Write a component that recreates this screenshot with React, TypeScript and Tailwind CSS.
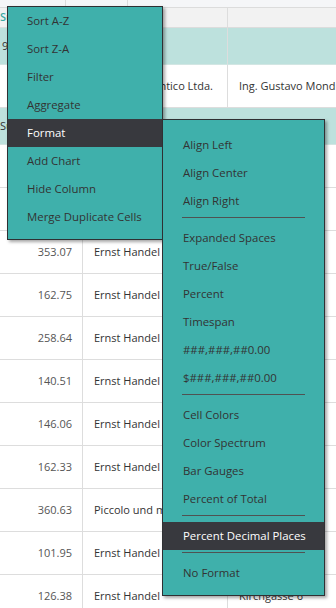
import React from "react";

const font = { fontFamily: '"Open Sans", "Noto Sans", Arial, sans-serif' };

const dataRows: [string, string, string?][] = [
  ["353.07", "Ernst Handel"],
  ["162.75", "Ernst Handel"],
  ["258.64", "Ernst Handel"],
  ["140.51", "Ernst Handel"],
  ["146.06", "Ernst Handel"],
  ["162.33", "Ernst Handel"],
  ["360.63", "Piccolo und mehr"],
  ["101.95", "Ernst Handel"],
  ["126.38", "Ernst Handel", "Kirchgasse 6"],
];

function Cell({ children, className = "" }: { children?: React.ReactNode; className?: string }) {
  return (
    <div className={"flex items-center overflow-hidden whitespace-nowrap border-r border-[#dddddd] " + className}>
      {children}
    </div>
  );
}

const mainItems = ["Sort A-Z", "Sort Z-A", "Filter", "Aggregate", "Format", "Add Chart", "Hide Column", "Merge Duplicate Cells"];

type SubItem = { t: string; sep?: boolean; hi?: boolean };
const subItems: SubItem[] = [
  { t: "Align Left" },
  { t: "Align Center" },
  { t: "Align Right" },
  { t: "", sep: true },
  { t: "Expanded Spaces" },
  { t: "True/False" },
  { t: "Percent" },
  { t: "Timespan" },
  { t: "###,###,##0.00" },
  { t: "$###,###,##0.00" },
  { t: "", sep: true },
  { t: "Cell Colors" },
  { t: "Color Spectrum" },
  { t: "Bar Gauges" },
  { t: "Percent of Total" },
  { t: "", sep: true },
  { t: "Percent Decimal Places", hi: true },
  { t: "", sep: true },
  { t: "No Format" },
];

export default function App() {
  return (
    <div className="relative w-[336px] h-[608px] overflow-hidden bg-white" style={font}>
      {/* top band */}
      <div className="flex h-[8px] bg-[#f5f6f8] border-b border-[#dcdcdc]">
        <div className="w-[66px] border-r border-[#dcdcdc]" />
        <div className="w-[62px] border-r border-[#dcdcdc]" />
        <div className="flex-1" />
      </div>
      {/* group row gray */}
      <div className="grid grid-cols-[83px_145px_1fr] h-[20px] bg-[#f2f2f2] border-b border-[#dcdcdc] text-[11px]">
        <div className="flex items-center overflow-hidden whitespace-nowrap text-[#3aa9a3] font-semibold">Sum</div>
        <Cell className="border-[#dcdcdc]" />
        <div />
      </div>
      {/* light teal row */}
      <div className="grid grid-cols-[83px_145px_1fr] h-[37px] bg-[#bde1dd] border-b border-[#d2e6e3] text-[11px] text-[#333]">
        <div className="flex items-center pl-[2px] overflow-hidden whitespace-nowrap">9,874.12</div>
        <Cell className="border-[#cfe5e2]" />
        <div />
      </div>
      {/* white row */}
      <div className="grid grid-cols-[83px_145px_1fr] h-[43px] bg-white border-b border-[#dddddd] text-[11px] text-[#333]">
        <Cell />
        <Cell className="justify-end pr-[14px]">Romero y tomillo Comercio Atlantico Ltda.</Cell>
        <div className="flex items-center pl-[11px] overflow-hidden whitespace-nowrap">Ing. Gustavo Mondragón</div>
      </div>
      {/* light teal group row */}
      <div className="grid grid-cols-[83px_145px_1fr] h-[37px] bg-[#bde1dd] border-b border-[#d2e6e3] text-[11px] text-[#333]">
        <div className="flex items-center overflow-hidden whitespace-nowrap">Sum</div>
        <div />
        <div />
      </div>
      <div className="grid grid-cols-[83px_145px_1fr] h-[43px] bg-white border-b border-[#dddddd]">
        <Cell />
        <Cell />
        <div />
      </div>
      <div className="grid grid-cols-[83px_145px_1fr] h-[43px] bg-white border-b border-[#dddddd]">
        <Cell />
        <Cell />
        <div />
      </div>
      {dataRows.map(([n, name, addr], i) => (
        <div key={i} className="grid grid-cols-[83px_145px_1fr] h-[43px] bg-white border-b border-[#dddddd] text-[11px]">
          <Cell className="justify-end pr-[10px] text-[#555]">{n}</Cell>
          <Cell className="pl-[11px] text-[#333]">{name}</Cell>
          <div className="flex items-center pl-[11px] overflow-hidden whitespace-nowrap text-[#333]">{addr ?? ""}</div>
        </div>
      ))}

      {/* main context menu */}
      <div className="absolute left-[7px] top-[6px] w-[156px] bg-[#3fb0ab] border border-[#2f3033] pb-[8px] shadow-[2px_2px_3px_rgba(0,0,0,0.35)] text-[11.4px]">
        {mainItems.map((t) => (
          <div
            key={t}
            className={
              "h-[28px] flex items-center pl-[19px] whitespace-nowrap " +
              (t === "Format" ? "bg-[#38393e] text-white" : "text-[#333]")
            }
          >
            {t}
          </div>
        ))}
      </div>

      {/* submenu */}
      <div className="absolute left-[162px] top-[119px] w-[163px] bg-[#3fb0ab] border border-[#2f3033] pt-[11px] pb-[8px] shadow-[2px_2px_3px_rgba(0,0,0,0.35)] text-[11.4px]">
        {subItems.map((s, i) =>
          s.sep ? (
            <div key={i} className="mx-[19px] mt-[2px] mb-[6px] h-px bg-[#4f5252]" />
          ) : (
            <div
              key={i}
              className={
                "h-[28px] flex items-center pl-[20px] whitespace-nowrap " +
                (s.hi ? "bg-[#38393e] text-white" : "text-[#333]")
              }
            >
              {s.t}
            </div>
          )
        )}
      </div>
    </div>
  );
}
